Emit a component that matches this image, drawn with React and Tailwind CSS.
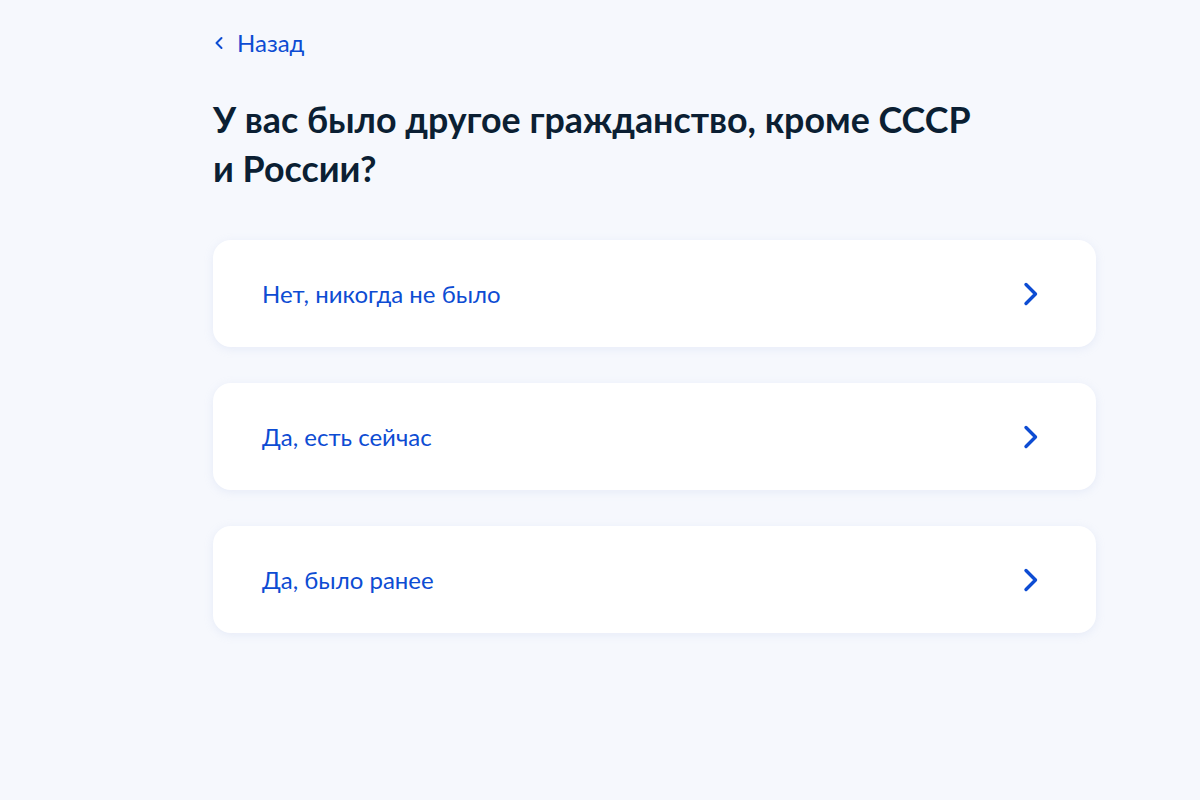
import React from "react";

const options = ["Нет, никогда не было", "Да, есть сейчас", "Да, было ранее"];

function Chevron() {
  return (
    <svg width="18" height="26" viewBox="0 0 18 26" fill="none">
      <path d="M4 3.5 L13.5 13 L4 22.5" stroke="#0d4cd3" strokeWidth="3.4" strokeLinecap="round" strokeLinejoin="round" />
    </svg>
  );
}

export default function App() {
  return (
    <div className="min-h-[800px] w-full bg-[#f6f8fd] font-['Lato','Liberation_Sans',sans-serif]">
      <div className="ml-[213px] w-[883px] pt-[30px]">
        <div className="flex items-center gap-[13px] text-[24px] leading-[26px] text-[#0d4cd3]">
          <svg width="10" height="14" viewBox="0 0 10 14" fill="none" className="ml-[1px]">
            <path d="M7.5 2 L2.5 7 L7.5 12" stroke="#0d4cd3" strokeWidth="2" strokeLinecap="round" strokeLinejoin="round" />
          </svg>
          <span>Назад</span>
        </div>
        <h1 className="mt-[39px] text-[35.8px] leading-[49px] font-bold text-[#0b1f33]">
          У вас было другое гражданство, кроме СССР
          <br />и России?
        </h1>
        <div className="mt-[47px] flex flex-col gap-[36px]">
          {options.map((o) => (
            <div
              key={o}
              className="flex h-[107px] items-center justify-between rounded-[18px] bg-white pl-[49px] pr-[56px] shadow-[0_2px_10px_rgba(160,175,220,0.18)]"
            >
              <span className="text-[24px] text-[#0d4cd3]">{o}</span>
              <Chevron />
            </div>
          ))}
        </div>
      </div>
    </div>
  );
}
